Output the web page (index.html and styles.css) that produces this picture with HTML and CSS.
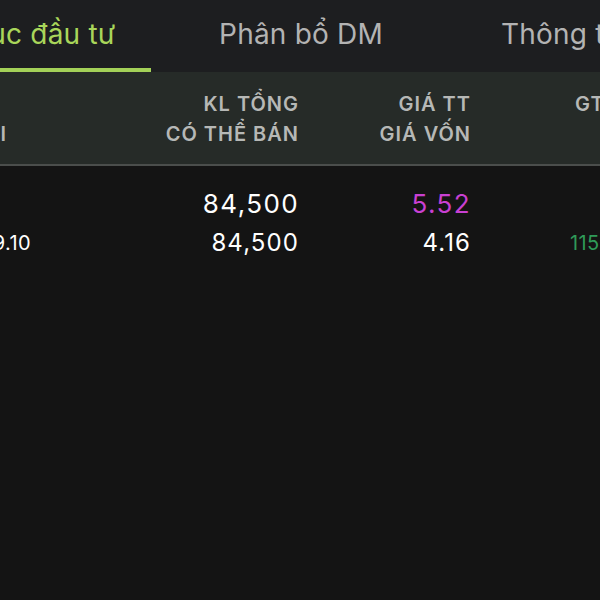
FILE: index.html
```html
<!DOCTYPE html>
<html lang="vi">
<head>
<meta charset="utf-8">
<link rel="stylesheet" href="styles.css">
</head>
<body>
<div class="screen">
  <nav class="tabs">
    <div class="tab active"><span>Danh mục đầu tư</span></div>
    <div class="tab"><span>Phân bổ DM</span></div>
    <div class="tab"><span>Thông tin khác</span></div>
  </nav>
  <div class="table">
    <div class="row head">
      <div class="cell c1"><span class="lead">MÃ CK</span><span>GIÁ TRỊ LÃI</span></div>
      <div class="cell c2"><span>KL TỔNG</span><span>CÓ THỂ BÁN</span></div>
      <div class="cell c3"><span>GIÁ TT</span><span>GIÁ VỐN</span></div>
      <div class="cell c4"><span>GT THỊ TRƯỜNG</span><span>&nbsp;</span></div>
    </div>
    <div class="row data">
      <div class="cell c1"><span class="big lead">HPG</span><span class="small shift">+32.69%  +119.10</span></div>
      <div class="cell c2"><span class="big">84,500</span><span class="mid">84,500</span></div>
      <div class="cell c3"><span class="big purple">5.52</span><span class="mid">4.16</span></div>
      <div class="cell c4"><span class="big">&nbsp;</span><span class="small green num">115,000,000</span></div>
    </div>
  </div>
</div>
</body>
</html>
```

FILE: styles.css
```css
* { box-sizing: border-box; }
html, body {
  margin: 0;
  padding: 0;
  background: #141414;
}
.screen {
  width: 600px;
  height: 600px;
  overflow: hidden;
  background: #141414;
  font-family: Inter, "Noto Sans", sans-serif;
}
.tabs {
  display: flex;
  height: 72px;
  background: #1d1e20;
  margin-left: -149px;
  width: 1049px;
}
.tab {
  flex: 0 0 300px;
  display: flex;
  justify-content: center;
  align-items: flex-start;
  padding-top: 17px;
  font-size: 28px;
  color: #b3b3b3;
  white-space: nowrap;
  letter-spacing: 0.2px;
  border-bottom: 4px solid transparent;
}
.tab.active {
  color: #a9d65a;
  border-bottom-color: #a3d158;
}
.table {
  margin-left: -294px;
  width: 1000px;
}
.row {
  display: grid;
  grid-template-columns: 300px 293px 172px 235px;
}
.head {
  height: 94px;
  background: #262b28;
  border-bottom: 2px solid #4b4e4c;
  padding-top: 17px;
  font-size: 20px;
  font-weight: 600;
  color: #b6b8b6;
  letter-spacing: 1px;
}
.cell {
  display: flex;
  flex-direction: column;
  align-items: flex-end;
  white-space: nowrap;
}
.c1 { margin-right: -1px; }
.lead { margin-right: 40px; }
.shift { margin-right: -24px; }
.head .cell span { line-height: 30px; }
.c4 { align-items: flex-start; padding-left: 104px; }
.num { margin-left: -5px; }
.data {
  padding-top: 20px;
  color: #ffffff;
}
.big {
  font-size: 26px;
  line-height: 36px;
  letter-spacing: 1.4px;
}
.mid {
  font-size: 24px;
  line-height: 42px;
  letter-spacing: 1.1px;
}
.small {
  font-size: 20px;
  line-height: 42px;
  letter-spacing: 0.4px;
}
.purple { color: #c940d2; }
.green { color: #2f9a58; }
```
